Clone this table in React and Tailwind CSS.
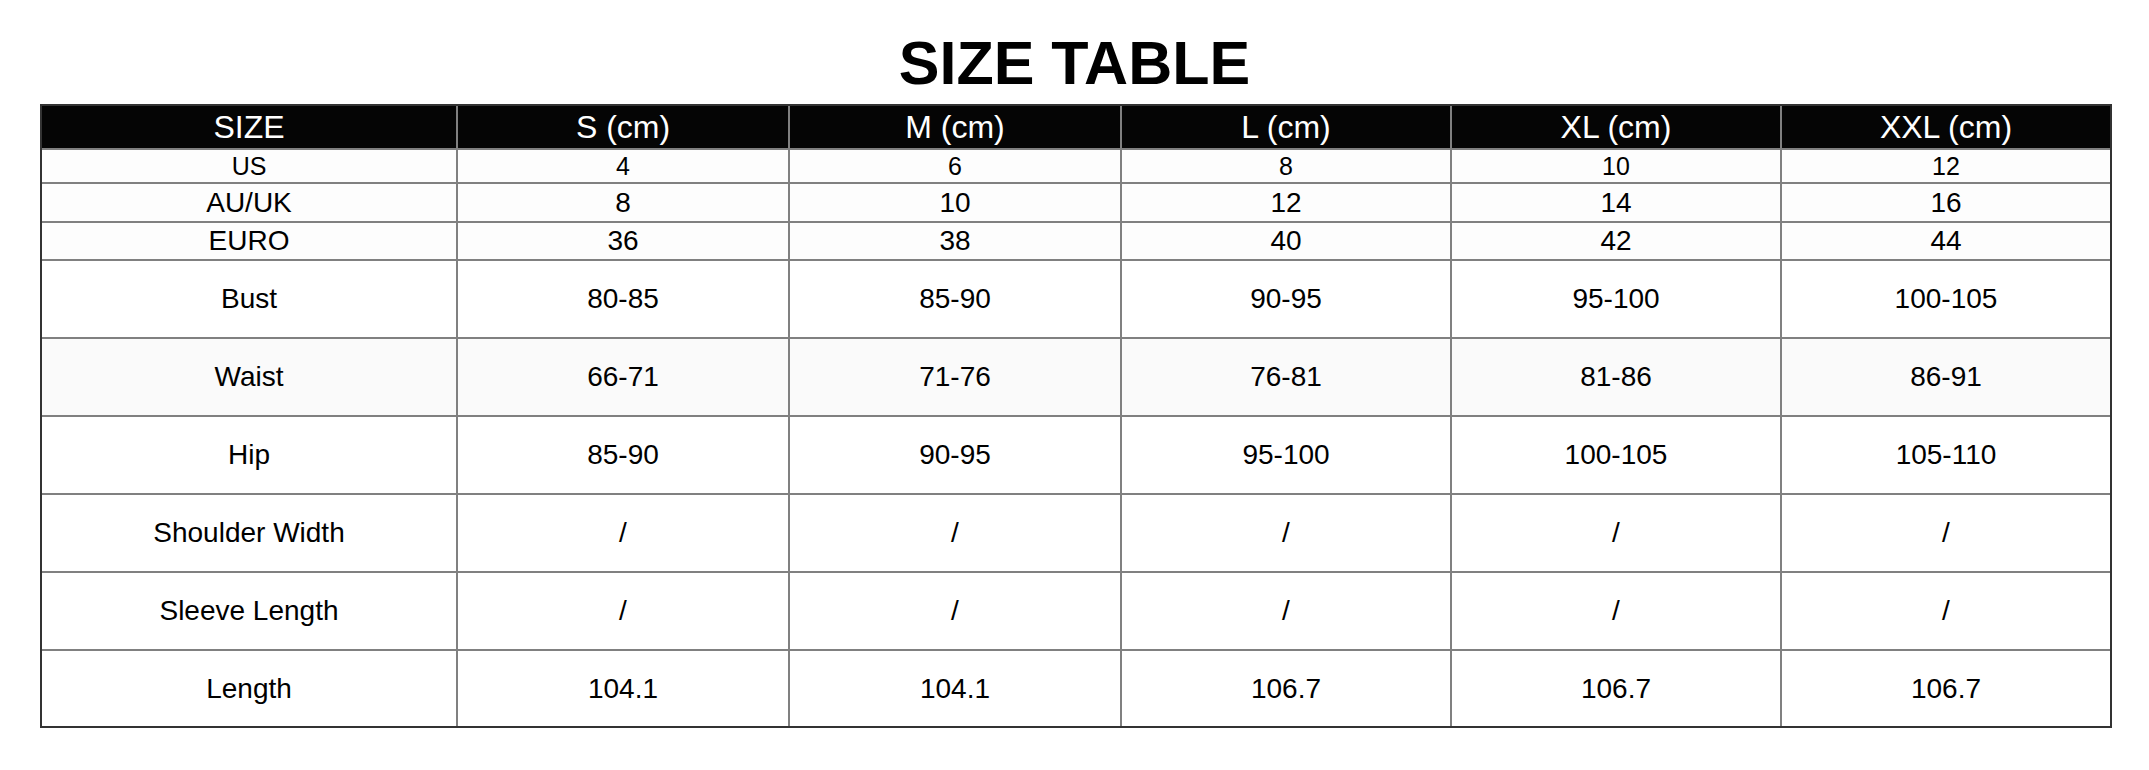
const columns = ["SIZE", "S (cm)", "M (cm)", "L (cm)", "XL (cm)", "XXL (cm)"];

const rows = [
  { label: "US", values: ["4", "6", "8", "10", "12"], h: "h-[34px]", text: "text-[25px]", bg: "bg-[#fdfdfd]" },
  { label: "AU/UK", values: ["8", "10", "12", "14", "16"], h: "h-[39px]", text: "text-[28px]", bg: "bg-[#fdfdfd]" },
  { label: "EURO", values: ["36", "38", "40", "42", "44"], h: "h-[38px]", text: "text-[28px]", bg: "bg-[#fdfdfd]" },
  { label: "Bust", values: ["80-85", "85-90", "90-95", "95-100", "100-105"], h: "h-[78px]", text: "text-[28px]", bg: "bg-white" },
  { label: "Waist", values: ["66-71", "71-76", "76-81", "81-86", "86-91"], h: "h-[78px]", text: "text-[28px]", bg: "bg-[#fafafa]" },
  { label: "Hip", values: ["85-90", "90-95", "95-100", "100-105", "105-110"], h: "h-[78px]", text: "text-[28px]", bg: "bg-white" },
  { label: "Shoulder Width", values: ["/", "/", "/", "/", "/"], h: "h-[78px]", text: "text-[28px]", bg: "bg-white" },
  { label: "Sleeve Length", values: ["/", "/", "/", "/", "/"], h: "h-[78px]", text: "text-[28px]", bg: "bg-white" },
  { label: "Length", values: ["104.1", "104.1", "106.7", "106.7", "106.7"], h: "h-[75px]", text: "text-[28px]", bg: "bg-white" },
];

const Cell = ({ children, last, lastRow, className }) => (
  <div
    className={`flex items-center justify-center leading-none border-[#808080] ${
      last ? "" : "border-r-2"
    } ${lastRow ? "" : "border-b-2"} ${className}`}
  >
    {children}
  </div>
);

const App = () => {
  return (
    <div className="w-[2149px] h-[770px] bg-white text-black font-['Liberation_Sans',Arial,sans-serif]">
      <h1 className="pt-[33px] mb-[11px] text-center text-[61px] leading-[60px] font-bold">
        SIZE TABLE
      </h1>
      <div className="ml-[40px] w-[2072px] border-2 border-[#333333]">
        <div className="grid grid-cols-[416px_332px_332px_330px_330px_328px] bg-[#050505] text-white">
          {columns.map((c, i) => (
            <Cell key={c} last={i === columns.length - 1} className="h-[44px] text-[32px]">
              {c}
            </Cell>
          ))}
        </div>
        {rows.map((r, ri) => {
          const lastRow = ri === rows.length - 1;
          return (
            <div
              key={r.label}
              className={`grid grid-cols-[416px_332px_332px_330px_330px_328px] ${r.bg}`}
            >
              <Cell lastRow={lastRow} className={`${r.h} ${r.text}`}>
                {r.label}
              </Cell>
              {r.values.map((v, vi) => (
                <Cell
                  key={vi}
                  last={vi === r.values.length - 1}
                  lastRow={lastRow}
                  className={`${r.h} ${r.text}`}
                >
                  {v}
                </Cell>
              ))}
            </div>
          );
        })}
      </div>
    </div>
  );
};

export default App;
